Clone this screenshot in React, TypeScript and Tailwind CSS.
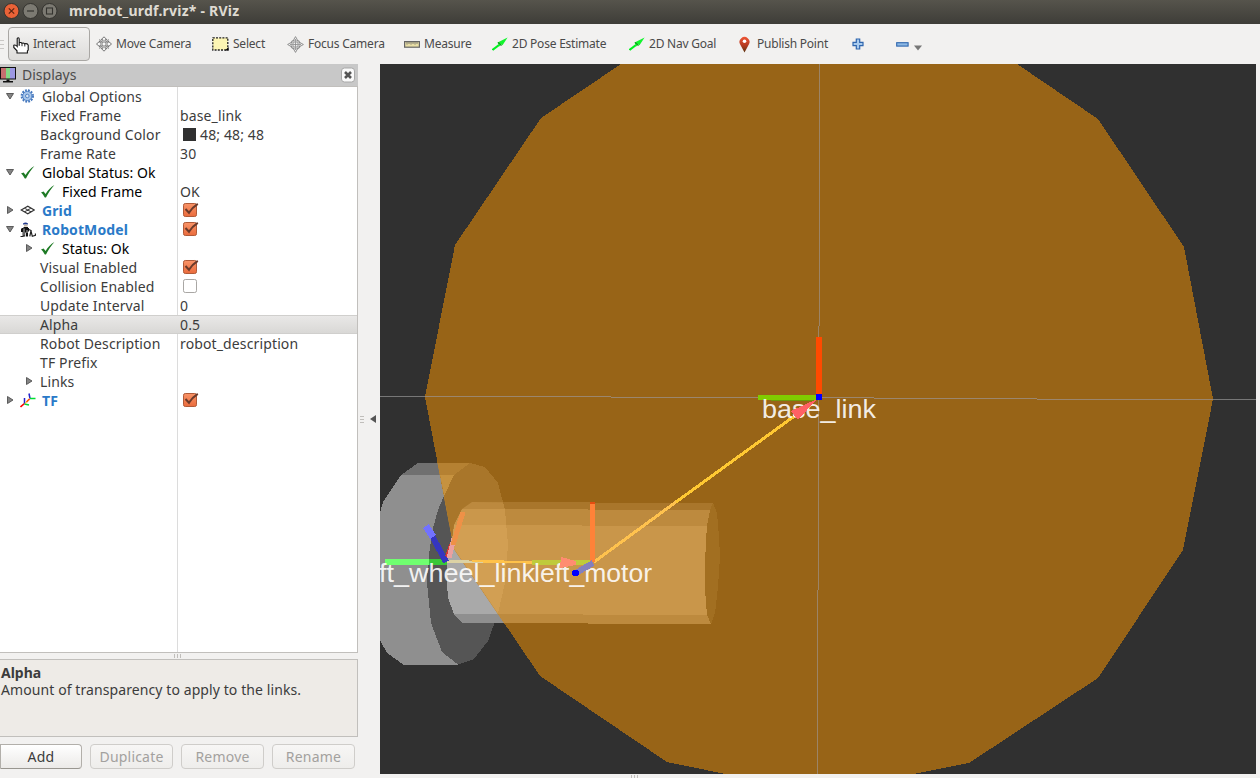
import type { ReactNode } from "react";

const UI = "font-['Noto_Sans','Open_Sans',sans-serif]";

function Check({ className = "" }: { className?: string }) {
  return (
    <svg className={className} width="15" height="14" viewBox="0 0 15 14">
      <path d="M1 7.6 L3.6 6.4 L5.6 9 C7.8 5.2 10.6 2.2 14.4 0 C11 3.8 8.2 8 6 12.6 L4.8 12.6 C3.8 10.8 2.6 9 1 7.6Z" fill="#1d7a24" />
    </svg>
  );
}

function Box({ on }: { on: boolean }) {
  return (
    <svg className="mb-px ml-0.5 block overflow-visible" width="17" height="16" viewBox="0 0 17 16">
      <defs>
        <linearGradient id="cb" x1="0" y1="0" x2="0" y2="1">
          <stop offset="0" stopColor="#f99468" />
          <stop offset="1" stopColor="#ea6b3c" />
        </linearGradient>
      </defs>
      <rect x="1.5" y="1.5" width="13" height="13" rx="1.8" fill={on ? "url(#cb)" : "#fff"} stroke={on ? "#b05a38" : "#a9a7a4"} />
      {on && <path d="M3.5 7 L7 10.8 C9 7.4 11.8 4.3 15.8 1.8" fill="none" stroke="#6b3a2a" strokeWidth="2" />}
    </svg>
  );
}

function Expander({ open }: { open: boolean }) {
  return (
    <svg className="mb-px" width="8" height="8" viewBox="0 0 8 8">
      <path d={open ? "M0.5 1.5H7.5L4 7Z" : "M1.5 0.5L7 4L1.5 7.5Z"} fill="#858585" stroke="#505050" strokeWidth="0.9" />
    </svg>
  );
}

function Gear() {
  return (
    <svg className="mb-0.5" width="14" height="14" viewBox="0 0 14 14">
      <circle cx="7.3" cy="7" r="5.6" fill="none" stroke="#4678bd" strokeWidth="2.2" strokeDasharray="1.8 1.13" />
      <circle cx="7.3" cy="7" r="4.6" fill="#a9c6ea" stroke="#4f82c6" />
      <circle cx="7.3" cy="7" r="1.8" fill="#d8e6f6" stroke="#5484c4" />
    </svg>
  );
}

function GridIcon() {
  return (
    <svg className="mb-0.5" width="15" height="14" viewBox="0 0 15 14">
      <path d="M1.2 7L7.8 3.2L14.2 7L7.8 10.8ZM4.5 5.1L11 8.9M11 5.1L4.5 8.9" fill="none" stroke="#333" strokeWidth="1.1" />
    </svg>
  );
}

function RobotIcon() {
  return (
    <svg width="16" height="16" viewBox="0 0 16 16">
      <path d="M3 1.5Q5.5 -0.3 8 1.5V2.6H3Z" fill="#233a8c" />
      <rect x="4" y="2.6" width="3.5" height="2" fill="#c5b8a4" />
      <path d="M2 6H3.5V5H8V6H9V9.5H8V14.5H6V10.5H5.2V14.5H2.6V10H1V7Z" fill="#111" />
      <path d="M4 6.5V13.5M7 8V11" stroke="#e5e5e5" strokeWidth="0.8" />
      <path d="M0.5 14.5H3.5M9 7.5L11 8.5L9.8 14.3M11 9L12.3 14.3L15.4 13.3V11.5" stroke="#222" strokeWidth="1.2" fill="none" />
    </svg>
  );
}

function TfIcon() {
  return (
    <svg width="16" height="16" viewBox="0 0 16 16">
      <path d="M0.5 14L4.5 10.5M6.5 9L9.5 6" stroke="#f00" strokeWidth="1.6" />
      <path d="M4.5 10.5V5M10 5.5L9 0.5" stroke="#22c" strokeWidth="1.5" />
      <path d="M4.5 11L9 12M10 5.5H15.5" stroke="#0d3" strokeWidth="1.5" />
      <path d="M5 10.5L9.5 6.2" stroke="#fb0" strokeWidth="1" />
    </svg>
  );
}

type Row = {
  label: string;
  level: 0 | 1 | 2;
  open?: boolean;
  icon?: ReactNode;
  tone?: string;
  value?: ReactNode;
  selected?: boolean;
};

const plain = "text-[#3c3c3c] tracking-[0.13px]";
const status = "text-black tracking-[0.04px]";
const link = "text-[#2a7ac8] font-bold tracking-[0.1px]";

const rows: Row[] = [
  { label: "Global Options", level: 0, open: true, icon: <Gear />, tone: plain },
  { label: "Fixed Frame", level: 1, value: "base_link" },
  {
    label: "Background Color",
    level: 1,
    value: (
      <span className="flex items-center gap-1">
        <span className="ml-[3px] size-[13px] bg-[#303030]" />
        48; 48; 48
      </span>
    ),
  },
  { label: "Frame Rate", level: 1, value: "30" },
  { label: "Global Status: Ok", level: 0, open: true, icon: <Check />, tone: status },
  { label: "Fixed Frame", level: 2, icon: <Check />, tone: status, value: "OK" },
  { label: "Grid", level: 0, open: false, icon: <GridIcon />, tone: link, value: <Box on /> },
  { label: "RobotModel", level: 0, open: true, icon: <RobotIcon />, tone: link, value: <Box on /> },
  { label: "Status: Ok", level: 2, open: false, icon: <Check />, tone: status },
  { label: "Visual Enabled", level: 1, value: <Box on /> },
  { label: "Collision Enabled", level: 1, value: <Box on={false} /> },
  { label: "Update Interval", level: 1, value: "0" },
  { label: "Alpha", level: 1, value: "0.5", selected: true },
  { label: "Robot Description", level: 1, value: "robot_description" },
  { label: "TF Prefix", level: 1 },
  { label: "Links", level: 1, open: false },
  { label: "TF", level: 0, open: false, icon: <TfIcon />, tone: link, value: <Box on /> },
];

function TreeRow({ row }: { row: Row }) {
  const bg = row.selected ? "bg-linear-to-b from-[#e9e8e7] to-[#d9d8d6] border-y border-[#d0cfcd]" : "";
  return (
    <div className={`flex h-[19px] items-center text-sm leading-[19px] ${bg}`}>
      <div className="flex h-full w-[177px] shrink-0 items-center whitespace-nowrap">
        <span className={row.level === 0 ? "w-5 pl-[5.5px]" : "w-10 pl-[25px]"}>
          {row.open !== undefined && <Expander open={row.open} />}
        </span>
        {row.icon && <span className="flex w-[22px] shrink-0 items-center">{row.icon}</span>}
        <span className={row.tone ?? plain}>{row.label}</span>
      </div>
      <div className={`pl-[3px] whitespace-nowrap ${plain}`}>{row.value}</div>
    </div>
  );
}

function Tool({ icon, label, className }: { icon: ReactNode; label?: string; className: string }) {
  return (
    <div className={`flex h-8 shrink-0 items-center gap-1 whitespace-nowrap text-xs tracking-[-0.22px] text-[#4a4a4a] ${className}`}>
      {icon}
      {label && <span>{label}</span>}
    </div>
  );
}

const handIcon = (
  <svg className="mt-0.5" width="16" height="17" viewBox="0 0 16 17">
    <path d="M4.2 9.5V2Q4.2 .8 5.2 .8T6.2 2V7.5V5.8Q8.6 4.8 9 7V6.3Q11.2 5.5 11.8 7.5V6.8Q14.6 6.2 15.2 8.2V13L14.4 14V16H4V13.8L.8 10.5V8.2Q2.3 7.3 4.2 9.5Z" fill="#fff" stroke="#111" strokeWidth="1.1" />
    <path d="M9 7V9.2M11.8 7.5V9.5M6.2 7V9" stroke="#111" strokeWidth=".9" />
  </svg>
);
const moveIcon = (
  <svg width="16" height="16" viewBox="0 0 16 16">
    <path d="M8 .8L11 3.8H9V7H12V5L15.5 8L12 11V9H9V12.2H11L8 15.2L5 12.2H7V9H4V11L.5 8L4 5V7H7V3.8H5Z" fill="#f8f8f8" stroke="#666" strokeWidth=".9" />
    <path d="M3 3.5L6 6M13 3.5L10 6M3 12.5L6 10M13 12.5L10 10" stroke="#777" strokeWidth=".9" />
  </svg>
);
const selectIcon = (
  <svg width="17" height="14" viewBox="0 0 17 14">
    <rect x=".8" y=".8" width="15" height="12.2" fill="#fcf5b4" stroke="#222" strokeWidth="1.3" strokeDasharray="2 1.2" />
    <path d="M13 13.6H16.6V10Z" fill="#000" />
  </svg>
);
const focusIcon = (
  <svg width="17" height="17" viewBox="0 0 17 17">
    <circle cx="8.5" cy="8.5" r="4.6" fill="#f2f1f0" stroke="#8a8a8a" strokeWidth="1.4" />
    <path d="M8.5 .6L10 3.2V7H13.8L16.4 8.5L13.8 10H10V13.8L8.5 16.4L7 13.8V10H3.2L.6 8.5L3.2 7H7V3.2Z" fill="#eee" stroke="#888" strokeWidth=".9" />
    <path d="M8.5 3V14M3 8.5H14" stroke="#888" strokeWidth=".8" />
  </svg>
);
const rulerIcon = (
  <svg width="16" height="7" viewBox="0 0 16 7">
    <rect x=".6" y=".6" width="14.8" height="5.6" fill="#e9dfa6" stroke="#666" strokeWidth="1.2" />
    <path d="M3 1V3.6M5 1V3M7 1V3.6M9 1V3M11 1V3.6M13 1V3" stroke="#666" strokeWidth=".8" />
  </svg>
);
const arrowIcon = (
  <svg width="16" height="14" viewBox="0 0 16 14">
    <path d="M.5 13L7 8" stroke="#00f020" strokeWidth="2.2" />
    <path d="M15.6 .6L10.5 8.2L9.5 7.6L7 9.4L5.6 5.4Z" fill="#12f52d" />
    <path d="M6 5.4L9.5 8.6" stroke="#168b20" strokeWidth="1.1" />
  </svg>
);
const pinIcon = (
  <svg width="11" height="17" viewBox="0 0 11 17">
    <defs>
      <linearGradient id="pin" x1="0" y1="0" x2="0" y2="1">
        <stop offset="0" stopColor="#ee5535" />
        <stop offset=".55" stopColor="#b53a20" />
        <stop offset="1" stopColor="#5b3512" />
      </linearGradient>
    </defs>
    <path d="M5.5 16.4L1.2 8.5A5 5 0 1 1 9.8 8.5Z" fill="url(#pin)" />
    <circle cx="5.5" cy="5.2" r="1.8" fill="#fff" />
  </svg>
);
const plusIcon = (
  <svg width="13" height="13" viewBox="0 0 13 13">
    <path d="M4.3 1H7.7V4.3H11V7.7H7.7V11H4.3V7.7H1V4.3H4.3Z" fill="#a9cbee" stroke="#2f66ae" strokeWidth="1.2" />
  </svg>
);
const minusIcon = (
  <svg width="13" height="5" viewBox="0 0 13 5">
    <rect x=".7" y=".7" width="11.4" height="3.4" fill="#8db8e4" stroke="#2f66ae" strokeWidth="1.1" />
  </svg>
);

function TitleBar() {
  return (
    <header className="flex h-6 shrink-0 items-center bg-linear-to-b from-[#56544c] to-[#3e3d38] pb-[3px] pl-[3px]">
      <svg width="56" height="18" viewBox="0 0 56 18">
        <circle cx="8.5" cy="9" r="7.5" fill="#ea6237" stroke="#33322e" />
        <path d="M5.8 6.3L11.2 11.7M11.2 6.3L5.8 11.7" stroke="#5b2411" strokeWidth="1.2" />
        <circle cx="27.5" cy="9" r="7.5" fill="#7c7a72" stroke="#33322e" />
        <path d="M24 9H31" stroke="#34332f" strokeWidth="1.2" />
        <circle cx="46.5" cy="9" r="7.5" fill="#7c7a72" stroke="#33322e" />
        <rect x="43.5" y="6" width="6" height="6" fill="none" stroke="#34332f" strokeWidth="1.1" />
      </svg>
      <h1 className="ml-[10px] text-sm leading-none font-bold tracking-[0.23px] whitespace-nowrap text-[#dfdbd2]">mrobot_urdf.rviz* - RViz</h1>
    </header>
  );
}

function ToolBar() {
  return (
    <nav className="flex h-10 shrink-0 items-center bg-[#f2f1f0]">
      <div className="flex w-2 flex-col gap-[3px]">
        <span className="h-px w-1 bg-[#c9c7c5]" />
        <span className="h-px w-1 bg-[#c9c7c5]" />
        <span className="h-px w-1 bg-[#c9c7c5]" />
      </div>
      <div className="flex h-[34px] w-[82px] shrink-0 items-center gap-1 rounded border border-[#a9a7a4] bg-linear-to-b from-[#f3f2f1] to-[#dddcda] pl-1 text-xs tracking-[-0.22px] text-[#4a4a4a]">
        {handIcon}
        <span>Interact</span>
      </div>
      <Tool className="ml-1.5 w-[116px]" icon={moveIcon} label="Move Camera" />
      <Tool className="w-[75px]" icon={selectIcon} label="Select" />
      <Tool className="w-[117px]" icon={focusIcon} label="Focus Camera" />
      <Tool className="w-[88px]" icon={rulerIcon} label="Measure" />
      <Tool className="w-[137px]" icon={arrowIcon} label="2D Pose Estimate" />
      <Tool className="w-[110px]" icon={arrowIcon} label="2D Nav Goal" />
      <Tool className="w-[113px] gap-[7px]" icon={pinIcon} label="Publish Point" />
      <Tool className="w-11" icon={plusIcon} />
      <Tool className="w-[19px]" icon={minusIcon} />
      <svg className="mt-[7px] -ml-px" width="8" height="6" viewBox="0 0 8 6">
        <path d="M0 .5H8L4 5.5Z" fill="#777" />
      </svg>
    </nav>
  );
}

function SideButton({ label, enabled = false }: { label: string; enabled?: boolean }) {
  const tone = enabled
    ? "w-[82px] rounded-r border-[#b2afaa] border-b-[#999690] text-[#3c3c3c] from-white to-[#eceae8]"
    : "w-[83px] rounded border-[#cfcdca] text-[#a3a19e] from-[#f7f6f5] to-[#eeedeb]";
  return <button className={`h-[25px] border bg-linear-to-b text-sm leading-[22px] tracking-[0.2px] ${tone}`}>{label}</button>;
}

function Displays() {
  return (
    <aside className="flex w-[358px] shrink-0 flex-col">
      <div className="flex h-[22px] shrink-0 items-center bg-[#c8c8c8] pr-[3px]">
        <svg width="16" height="16" viewBox="0 0 16 16">
          <rect x="0" y="0" width="16" height="12.5" fill="#111" />
          <rect x="1" y="1" width="5" height="10.5" fill="#c66e70" />
          <rect x="6" y="1" width="4" height="10.5" fill="#83d886" />
          <rect x="10" y="1" width="5" height="10.5" fill="#9c98e3" />
          <path d="M6.5 12.5H9.5V14H13V15.5H3V14H6.5Z" fill="#111" />
        </svg>
        <h2 className="ml-1.5 flex-1 text-sm leading-none text-[#4c4c4c]">Displays</h2>
        <svg width="14" height="16" viewBox="0 0 14 16">
          <rect x=".5" y="1" width="13" height="14" rx="3" fill="#fafafa" stroke="#a8a8a8" />
          <path d="M4 5L10 11M10 5L4 11" stroke="#555" strokeWidth="2.6" />
        </svg>
      </div>
      <div className="flex h-[567px] shrink-0 flex-col border border-l-0 border-[#c1bfbc] bg-[linear-gradient(to_right,white_177px,#dcdcdc_177px,#dcdcdc_178px,white_178px)]">
        {rows.map((row, i) => (
          <TreeRow key={i} row={row} />
        ))}
      </div>
      <div className="flex h-1.5 shrink-0 items-center justify-center gap-0.5 pr-1">
        <span className="h-1 w-px bg-[#c0bebb]" />
        <span className="h-1 w-px bg-[#c0bebb]" />
        <span className="h-1 w-px bg-[#c0bebb]" />
      </div>
      <section className="h-[78px] shrink-0 border border-l-0 border-[#c1bfbc] bg-[#eeebe7] pt-1 pl-px text-sm leading-[17px] text-[#3c3c3c]">
        <h3 className="font-bold">Alpha</h3>
        <p className="tracking-[0.09px] whitespace-nowrap">Amount of transparency to apply to the links.</p>
      </section>
      <div className="mt-[7px] flex gap-2">
        <SideButton label="Add" enabled />
        <SideButton label="Duplicate" />
        <SideButton label="Remove" />
        <SideButton label="Rename" />
      </div>
    </aside>
  );
}

const disk = "621,64 541,118 455,245 425,397 454,549 540,676 667,762 818,793 969,763 1098,678 1183,550 1213,399 1184,247 1098,119 1017,64";
const wheelSide = "418,463 470,463 485,467 498,483 505,510 508,540 505,583 498,613 488,641 474,659 458,664.5 404,665 387,653 380,640 380,513 383,502 401,475";
const wheelFace = "470,463 485,467 498,483 505,510 508,545 505,583 498,613 488,641 474,659 458,664.5 442,652 431,623 427,583 428,563 432,532 438,510 444,496 454,475";
const motor = "472,502 713,503 711,624 462,623 454,614 448,598 447,583 447,560 452,540 454,525 462,509";

function Solids({ side, top, face, body, band, rim }: { side: string; top: string; face: string; body: string; band: string; rim: string }) {
  return (
    <>
      <polygon points={wheelSide} fill={side} />
      <polygon points="418,463 470,463 454,475 401,475" fill={top} />
      <polygon points={wheelFace} fill={face} />
      <polygon points={motor} fill={body} />
      <polygon points="472,502 713,503 710,510 462,509" fill={rim} />
      <polygon points="462,509 710,510 707,526 454,525" fill={band} />
      <polygon points="454,614 708,615 711,624 462,623" fill={band} />
    </>
  );
}

function Scene() {
  return (
    <svg className="block" width="876" height="710" viewBox="380 64 876 710" shapeRendering="crispEdges">
      <defs>
        <clipPath id="disk">
          <polygon points={disk} />
        </clipPath>
        <clipPath id="motor">
          <polygon points={motor} />
        </clipPath>
      </defs>
      <rect x="380" y="64" width="876" height="710" fill="#303030" />
      <Solids side="#8f8f8f" top="#707070" face="#555555" body="#a9a9a9" band="#8f8f8f" rim="#707070" />
      <polygon points={disk} fill="#986417" />
      <g clipPath="url(#disk)">
        <Solids side="#c6923f" top="#b58132" face="#a9762a" body="#c9964a" band="#bd8a3e" rim="#a9762b" />
        <polygon points={wheelFace} fill="#e8b56a" opacity=".3" clipPath="url(#motor)" />
        <polygon points="713,503 717,513 719,537 720,557 718,587 715,613 711,624 707,615 705,590 705,565 706,540 707,526 710,510" fill="#a26f21" />
      </g>
      <path d="M380 396.5H611M611 397.5H874M874 398.5H1037M1037 399.5H1256" stroke="#9b866e" strokeWidth="1" />
      <path d="M380 396.5H425M1213 399.5H1256" stroke="#777" strokeWidth="1" />
      <path d="M819.5 64V326M818.5 326V590M817.5 590V774" stroke="#9c8466" strokeWidth="1" />

      <path d="M594 562L680 499" stroke="#ffc24e" strokeWidth="3" />
      <path d="M676 502L800 412" stroke="#ffc832" strokeWidth="3" />
      <path d="M447 561.5L490 562" stroke="#dcd2a4" strokeWidth="2.5" />
      <path d="M472 561L535 562.5" stroke="#ffc24a" strokeWidth="2.5" />
      <path d="M385 562H430" stroke="#70ff70" strokeWidth="6" />
      <path d="M429 562H447" stroke="#38c838" strokeWidth="6" />
      <path d="M446 562L430 532" stroke="#3535bf" strokeWidth="6" />
      <path d="M433 537L426 526" stroke="#7272ff" strokeWidth="7" />
      <path d="M447 557L451 545" stroke="#d83535" strokeWidth="4" />
      <path d="M449 558L454 538" stroke="#eaa0a0" strokeWidth="5" />
      <path d="M453 545L463 512" stroke="#ee9147" strokeWidth="5" />
      <path d="M532 562H592" stroke="#bfca3b" strokeWidth="5" />
      <path d="M592.5 502V562" stroke="#ff8238" strokeWidth="5" />
      <path d="M592.5 502V504" stroke="#e54d10" strokeWidth="5" />
      <path d="M819 337V397" stroke="#ff4a00" strokeWidth="6" />
      <path d="M758 397.5H816" stroke="#80cc00" strokeWidth="5" />
      <path d="M771 400.5H816" stroke="#6e990b" strokeWidth="1" />

      <g fill="#fff" fillOpacity=".9" fontSize="26" fontFamily="Liberation Sans, Arial, sans-serif">
        <text x="379" y="582" textLength="156" lengthAdjust="spacingAndGlyphs">ft_wheel_link</text>
        <text x="534" y="582" textLength="118" lengthAdjust="spacingAndGlyphs">left_motor</text>
        <text x="762" y="418" textLength="114" lengthAdjust="spacingAndGlyphs">base_link</text>
      </g>

      <polygon points="561,557 576,561 576,565 560,568" fill="#ff8c70" />
      <path d="M576 573L593 563" stroke="#8480be" strokeWidth="6" />
      <circle cx="575.5" cy="573" r="3.5" fill="#0000ff" />
      <polygon points="791,411 817,399 798,420" fill="#ff6164" />
      <circle cx="819" cy="397" r="3.5" fill="#0000ff" />
    </svg>
  );
}

export default function App() {
  return (
    <div className={`flex h-[778px] w-[1260px] flex-col overflow-hidden bg-[#f2f1f0] ${UI}`}>
      <TitleBar />
      <ToolBar />
      <main className="flex flex-1">
        <Displays />
        <div className="flex h-[710px] w-[22px] items-center justify-center gap-1.5 pr-[3px]">
          <div className="flex flex-col gap-0.5">
            <span className="h-px w-1 bg-[#c0bebb]" />
            <span className="h-px w-1 bg-[#c0bebb]" />
            <span className="h-px w-1 bg-[#c0bebb]" />
          </div>
          <svg width="6" height="8" viewBox="0 0 6 8">
            <path d="M6 0V8L0 4Z" fill="#555" />
          </svg>
        </div>
        <div className="flex w-[876px] flex-col">
          <Scene />
          <div className="flex h-1 items-center gap-0.5 pl-[251px]">
            <span className="h-[3px] w-px bg-[#c0bebb]" />
            <span className="h-[3px] w-px bg-[#c0bebb]" />
            <span className="h-[3px] w-px bg-[#c0bebb]" />
          </div>
        </div>
      </main>
    </div>
  );
}
